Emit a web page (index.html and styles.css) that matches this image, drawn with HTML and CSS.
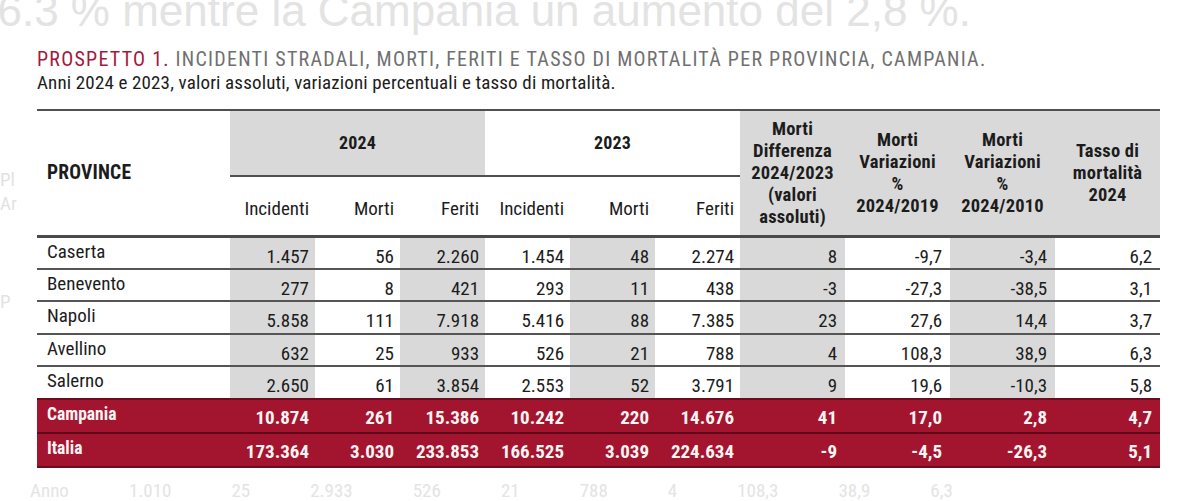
FILE: index.html
```html
<!DOCTYPE html>
<html lang="it">
<head>
<meta charset="utf-8">
<title>Prospetto 1 - Incidenti stradali Campania</title>
<link rel="stylesheet" href="styles.css">
</head>
<body>
<div class="ghost-top">16.3 % mentre la Campania un aumento del 2,8 %.</div>
<div class="ghost-left">
  <span class="gl1">Pl</span>
  <span class="gl2">Ar</span>
  <span class="gl3">P</span>
</div>
<main class="card">
  <h1 class="title"><span class="tag">PROSPETTO 1.</span> INCIDENTI STRADALI, MORTI, FERITI E TASSO DI MORTALITÀ PER PROVINCIA, CAMPANIA.</h1>
  <p class="subtitle">Anni 2024 e 2023, valori assoluti, variazioni percentuali e tasso di mortalità.</p>
  <table class="tbl">
    <colgroup>
      <col class="c-prov">
      <col class="c-n"><col class="c-n"><col class="c-n">
      <col class="c-n"><col class="c-n"><col class="c-n">
      <col class="c-w"><col class="c-w"><col class="c-w"><col class="c-w">
    </colgroup>
    <thead>
      <tr class="hr1">
        <th rowspan="2" class="prov">PROVINCE</th>
        <th colspan="3" class="grp shade">2024</th>
        <th colspan="3" class="grp">2023</th>
        <th rowspan="2" class="multi shade">Morti<br>Differenza<br>2024/2023<br>(valori<br>assoluti)</th>
        <th rowspan="2" class="multi shade">Morti<br>Variazioni<br>%<br>2024/2019</th>
        <th rowspan="2" class="multi shade">Morti<br>Variazioni<br>%<br>2024/2010</th>
        <th rowspan="2" class="multi shade">Tasso di<br>mortalità<br>2024</th>
      </tr>
      <tr class="hr2">
        <th class="sub">Incidenti</th><th class="sub">Morti</th><th class="sub">Feriti</th>
        <th class="sub">Incidenti</th><th class="sub">Morti</th><th class="sub">Feriti</th>
      </tr>
    </thead>
    <tbody>
      <tr class="row">
        <td class="name">Caserta</td>
        <td class="num shade">1.457</td><td class="num">56</td><td class="num shade">2.260</td>
        <td class="num">1.454</td><td class="num shade">48</td><td class="num">2.274</td>
        <td class="num wide shade">8</td><td class="num wide">-9,7</td><td class="num wide shade">-3,4</td><td class="num wide">6,2</td>
      </tr>
      <tr class="row">
        <td class="name">Benevento</td>
        <td class="num shade">277</td><td class="num">8</td><td class="num shade">421</td>
        <td class="num">293</td><td class="num shade">11</td><td class="num">438</td>
        <td class="num wide shade">-3</td><td class="num wide">-27,3</td><td class="num wide shade">-38,5</td><td class="num wide">3,1</td>
      </tr>
      <tr class="row">
        <td class="name">Napoli</td>
        <td class="num shade">5.858</td><td class="num">111</td><td class="num shade">7.918</td>
        <td class="num">5.416</td><td class="num shade">88</td><td class="num">7.385</td>
        <td class="num wide shade">23</td><td class="num wide">27,6</td><td class="num wide shade">14,4</td><td class="num wide">3,7</td>
      </tr>
      <tr class="row">
        <td class="name">Avellino</td>
        <td class="num shade">632</td><td class="num">25</td><td class="num shade">933</td>
        <td class="num">526</td><td class="num shade">21</td><td class="num">788</td>
        <td class="num wide shade">4</td><td class="num wide">108,3</td><td class="num wide shade">38,9</td><td class="num wide">6,3</td>
      </tr>
      <tr class="row">
        <td class="name">Salerno</td>
        <td class="num shade">2.650</td><td class="num">61</td><td class="num shade">3.854</td>
        <td class="num">2.553</td><td class="num shade">52</td><td class="num">3.791</td>
        <td class="num wide shade">9</td><td class="num wide">19,6</td><td class="num wide shade">-10,3</td><td class="num wide">5,8</td>
      </tr>
      <tr class="total first">
        <td class="name">Campania</td>
        <td class="num">10.874</td><td class="num">261</td><td class="num">15.386</td>
        <td class="num">10.242</td><td class="num">220</td><td class="num">14.676</td>
        <td class="num wide">41</td><td class="num wide">17,0</td><td class="num wide">2,8</td><td class="num wide">4,7</td>
      </tr>
      <tr class="total last">
        <td class="name">Italia</td>
        <td class="num">173.364</td><td class="num">3.030</td><td class="num">233.853</td>
        <td class="num">166.525</td><td class="num">3.039</td><td class="num">224.634</td>
        <td class="num wide">-9</td><td class="num wide">-4,5</td><td class="num wide">-26,3</td><td class="num wide">5,1</td>
      </tr>
    </tbody>
  </table>
</main>
<div class="ghost-bottom">
  <span class="gb-name">Anno</span>
  <span>1.010</span><span>25</span><span>2.933</span><span>526</span><span>21</span><span>788</span><span>4</span><span>108,3</span><span>38,9</span><span>6,3</span>
</div>
</body>
</html>
```

FILE: styles.css
```css
html, body {
  margin: 0;
  padding: 0;
}

body {
  width: 1190px;
  height: 501px;
  overflow: hidden;
  background: #ffffff;
  position: relative;
  font-family: "Roboto Condensed", "DejaVu Sans Condensed", "Liberation Sans", sans-serif;
  font-stretch: condensed;
  color: #1c1c1c;
}

.ghost-top {
  font-family: "Liberation Sans", Arial, sans-serif;
  font-stretch: normal;
  font-size: 44px;
  line-height: 48px;
  height: 48px;
  margin-top: -13px;
  margin-left: -27px;
  margin-bottom: -2px;
  white-space: nowrap;
  color: #e3e3e3;
}

.ghost-left {
  position: absolute;
  left: 0;
  top: 0;
  width: 30px;
  height: 501px;
  color: #e2e2e2;
  font-size: 19px;
}

.ghost-left span {
  position: absolute;
  left: 0;
}

.gl1 { top: 168px; }
.gl2 { top: 192px; }
.gl3 { top: 290px; }

.card {
  margin-left: 37px;
  width: 1123px;
  padding-top: 15px;
}

.title {
  margin: 0;
  font-size: 20px;
  line-height: 22px;
  font-weight: normal;
  letter-spacing: 1.25px;
  color: #707070;
  white-space: nowrap;
}

.tag {
  color: #a5183d;
}

.subtitle {
  margin: 2px 0 0 0;
  font-size: 19px;
  line-height: 22px;
  letter-spacing: 0.15px;
  color: #1c1c1c;
  white-space: nowrap;
}

.tbl {
  margin-top: 15px;
  border-collapse: collapse;
  table-layout: fixed;
  width: 1123px;
  border-top: 2px solid #505050;
}

.c-prov { width: 193px; }
.c-n { width: 85px; }
.c-w { width: 105px; }

th {
  font-weight: bold;
  font-size: 18.5px;
  line-height: 22px;
  letter-spacing: 0.2px;
  padding: 0;
  color: #1c1c1c;
}

.shade {
  background: #d9d9d9;
}

.hr1 {
  height: 66px;
}

.hr2 {
  height: 60px;
}

.prov {
  font-size: 19.5px;
  text-align: left;
  padding-left: 10px;
  vertical-align: middle;
}

.grp {
  font-size: 18px;
  text-align: center;
  vertical-align: middle;
  border-bottom: 2px solid #505050;
}

.multi {
  text-align: center;
  vertical-align: middle;
}

.sub {
  font-weight: normal;
  font-size: 19px;
  letter-spacing: 0;
  text-align: right;
  padding-right: 6px;
  padding-top: 6px;
}

thead tr.hr2 {
  border-bottom: 3px solid #4a4a4a;
}

td {
  font-size: 19px;
  line-height: 22px;
  padding: 0;
}

.row {
  height: 32.5px;
  border-bottom: 2px solid #555555;
}

.row:nth-child(5) {
  border-bottom: none;
}

.name {
  text-align: left;
  padding-left: 10px;
  padding-bottom: 2px;
  vertical-align: middle;
}

.num {
  text-align: right;
  padding-right: 6px;
  padding-top: 8px;
  vertical-align: middle;
}

.num.wide {
  padding-right: 8px;
}

.total {
  background: #a3142f;
  color: #ffffff;
  font-weight: bold;
  height: 34px;
}

.total td {
  color: #fff4f4;
}

.total .name {
  font-size: 17.5px;
  padding-bottom: 4px;
}

.total .num {
  padding-top: 5px;
}

.total.first {
  border-top: 2px solid #6a0c1f;
  border-bottom: 2px solid #5f0a1b;
}

.total.last {
  border-bottom: 2px solid #6a0c1f;
}

.ghost-bottom {
  margin-top: 12px;
  margin-left: 30px;
  display: flex;
  gap: 60px;
  color: #e4e4e4;
  font-size: 19px;
  line-height: 22px;
  white-space: nowrap;
}
```
